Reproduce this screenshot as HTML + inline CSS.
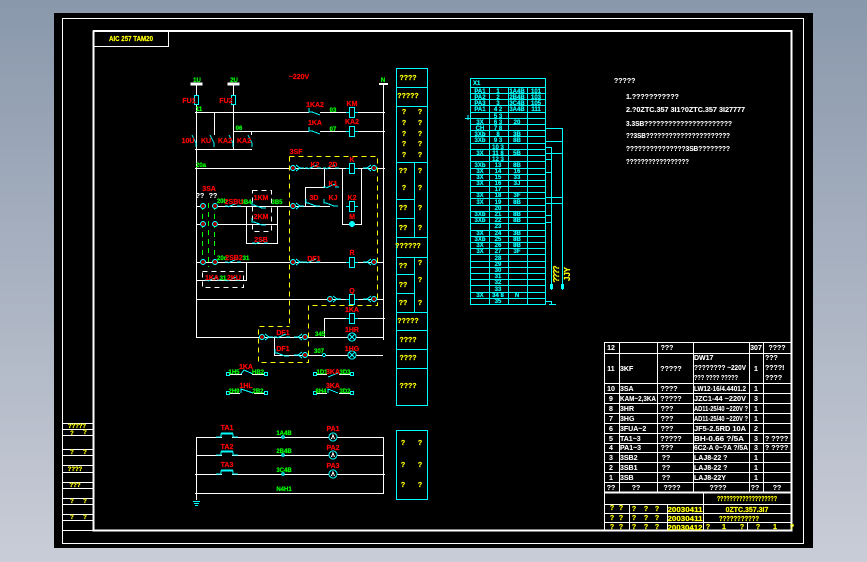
<!DOCTYPE html>
<html><head><meta charset="utf-8"><style>
html,body{margin:0;padding:0;width:867px;height:562px;overflow:hidden;background:linear-gradient(#8a98ac,#c9cdd7)}
svg{position:absolute;left:0;top:0;display:block}
svg *{shape-rendering:crispEdges}
text{font-family:"Liberation Sans",sans-serif;font-weight:bold;text-anchor:middle;stroke-width:.2px}
.r{fill:#f00;stroke:#f00;font-size:7px}.g{fill:#0f0;stroke:#0f0;font-size:6px}.y{fill:#ff0;stroke:#ff0;font-size:7px}
.w{fill:#fff;stroke:#fff;font-size:7px;stroke-width:.1px}.c{fill:#0ff;stroke:#0ff;font-size:6px}
.l{text-anchor:start}
.wl{stroke:#fff;fill:none}.cl{stroke:#0ff;fill:none}.yd{stroke:#ff0;fill:none;stroke-dasharray:5 4}.wd{stroke:#fff;fill:none;stroke-dasharray:5 4}.gd{stroke:#0f0;fill:none;stroke-dasharray:5 4}
</style></head><body>
<svg width="867" height="562" viewBox="0 0 867 562" xmlns="http://www.w3.org/2000/svg">
<defs>
<g id="coil"><rect x="-2.5" y="-5.5" width="5" height="10" fill="#000" stroke="#0ff" stroke-width="1"/><path d="M-6 -.5H-2.5M2.5 -.5H6" stroke="#0ff"/></g>
<g id="no"><path d="M-10 0H-7M-7 1L2 -3M2 0H6" stroke="#0ff" fill="none"/></g>
<g id="nc"><path d="M-9 -4V0H-7L1 3H5" stroke="#0ff" fill="none"/></g>
<g id="tl"><circle cx="0" cy="0" r="2.5" fill="#900" stroke="#0ff"/><path d="M3 -3L7 0L3 3M7 0H11" stroke="#0ff" fill="none"/></g>
<g id="tr"><circle cx="0" cy="0" r="2.5" fill="#900" stroke="#0ff"/><path d="M-3 -3L-7 0L-3 3M-7 0H-11" stroke="#0ff" fill="none"/></g>
<g id="t"><circle cx="0" cy="0" r="2.5" fill="#900" stroke="#0ff"/></g>
<g id="lamp"><circle r="4" fill="#000" stroke="#0ff"/><path d="M-3 -3L3 3M3 -3L-3 3" stroke="#0ff"/></g>
<g id="amm"><circle r="4" fill="#000" stroke="#0ff"/><path d="M-1.5 2L0 -2L1.5 2" stroke="#fff" fill="none"/></g>
<g id="push"><path d="M-11 0H-6V-3H6V0H11" stroke="#0ff" fill="none"/><path d="M-6 -4H6" stroke="#0ff"/></g>
<g id="dot"><rect x="-1.5" y="-1.5" width="3" height="3" fill="#000" stroke="#0ff"/></g>
</defs>
<rect x="54" y="13" width="759" height="535" fill="#000"/>
<g>
<rect x="62.5" y="18.5" width="741" height="525" class="wl"/>
<path d="M93.5 30.5V530.5H791.5V31H93" stroke="#fff" stroke-width="2" fill="none"/>
<path d="M168.5 31V46.5H94" class="wl"/>
<path d="M62 423.5H93M62 429.5H93M62 435.5H93M62 449.5H93M62 455.5H93M62 465.5H93M62 472.5H93M62 482.5H93M62 488.5H93M62 498.5H93M62 504.5H93M62 514.5H93M62 520.5H93M62 530.5H93" class="wl"/>
<path d="M196.5 84V337.5M233.5 84V150M383.5 84V340" class="wl"/>
<path d="M195 112.5H309M320 112.5H346M358 112.5H385M233 131.5H309M320 131.5H346M358 131.5H385" class="wl"/>
<path d="M214.5 112V135M195 149.5H252M195 168.5H385M251.5 131V135" class="wl"/>
<path d="M196 206.5H200M216 206.5H330M196 224.5H200M216 224.5H278M246.5 206V243.5H277.5V206" class="wl"/>
<path d="M196 262.5H383M196 280.5H246.5V262M196 299.5H383M196 337.5H383M274.5 337V355.5H383M324.5 337V318.5H385M305.5 206V187.5H324.5V168M342.5 168V206M342.5 206V224.5H361.5V168" class="wl"/>
<path d="M196.5 437V500M383.5 437V493.5M196 437.5H383M196 455.5H383M195 474.5H385M195 493.5H384" class="wl"/>
<path d="M191 83H202V85H191ZM228 83H239V85H228Z" fill="#fff" stroke="#fff"/>
<path d="M379 83H388V85H379Z" fill="#fff"/>
<rect x="194.5" y="95.5" width="4" height="9" fill="#000" stroke="#0ff"/>
<rect x="231.5" y="95.5" width="4" height="9" fill="#000" stroke="#0ff"/>
<path d="M289.5 156.5H377.5V305.5H308.5V362.5H258.5V326.5H289.5M289.5 156.5V326" class="yd"/>
<path d="M252.5 190.5H271.5V231.5H252.5Z" class="wd"/>
<path d="M202.5 271.5H243.5V287.5H202.5Z" class="wd"/>
<path d="M202.5 205V267M208.5 203V267M214.5 205V267" class="gd"/>
<path d="M396.5 68.5H427.5V405.5H396.5ZM396 87.5H428M396 106.5H428M396 162.5H428M396 199.5H414M396 218.5H414M396 237.5H428M396 257.5H428M396 274.5H414M396 293.5H414M396 312.5H428M396 330.5H428M396 349.5H428M396 368.5H428M414.5 162V237M414.5 257V312" class="cl"/>
<rect x="396.5" y="430.5" width="31" height="69" class="cl"/>
<rect x="470.5" y="78.5" width="75" height="226" class="cl"/>
<path d="M470 87.5H545M470 93.5H545M470 99.5H545M470 105.5H545M470 112.5H545M470 118.5H545M470 124.5H545M470 130.5H545M470 136.5H545M470 143.5H545M470 149.5H545M470 155.5H545M470 161.5H545M470 168.5H545M470 174.5H545M470 180.5H545M470 186.5H545M470 192.5H545M470 198.5H545M470 205.5H545M470 211.5H545M470 217.5H545M470 223.5H545M470 230.5H545M470 236.5H545M470 242.5H545M470 248.5H545M470 254.5H545M470 261.5H545M470 267.5H545M470 273.5H545M470 279.5H545M470 285.5H545M470 292.5H545M470 298.5H545" class="cl"/>
<path d="M489.5 87V305M508.5 87V305M527.5 87V305" class="cl"/>
<path d="M545 128.5H562.5V290M545 141.5H562M545 147.5H551.5V290M545 153.5H562M545 159.5H551M545 172.5H551M545 197.5H562M545 203.5H562M545 215.5H551M545 222.5H551M545 301.5H551.5V304M549 304.5H556" class="cl"/>
<rect x="550" y="284" width="3" height="5" fill="#0ff"/><rect x="561" y="284" width="3" height="5" fill="#0ff"/>
<path d="M465 118.5H470M468 115V120" class="cl"/>
<path d="M604.5 342.5H791M604 353.5H791M604 383.5H791M604 393.5H791M604 403.5H791M604 413.5H791M604 423.5H791M604 433.5H791M604 443.5H791M604 452.5H791M604 462.5H791M604 472.5H791M604 482.5H791" class="wl"/>
<path d="M604 492.5H791" stroke="#fff" stroke-width="2"/>
<path d="M604 504.5H791M604 513.5H791M604 522.5H791" class="wl"/>
<path d="M604.5 342V530M619.5 342V492M657.5 342V492M693.5 342V492M749.5 342V492M763.5 342V492M629.5 504V530M667.5 504V530M703.5 492V530M747.5 522V530" class="wl"/>
</g>
<use href="#coil" x="352" y="113"/><use href="#coil" x="352" y="132"/>
<use href="#coil" x="352" y="169"/><use href="#coil" x="352" y="207"/>
<use href="#coil" x="352" y="263"/><use href="#coil" x="352" y="300"/><use href="#coil" x="352" y="319"/>
<path d="M309 108V112H312L320 115M192 135L196 143V147M210 135L214 143V147M229 135L233 143V147M248 135L252 143V147M309 127V131H312L320 134" stroke="#0ff" fill="none"/>
<use href="#tl" x="293" y="168"/><use href="#tr" x="374" y="168"/><use href="#tl" x="293" y="206"/>
<use href="#no" x="315" y="168"/><use href="#no" x="333" y="168"/><use href="#no" x="333" y="187"/>
<use href="#nc" x="315" y="203"/><use href="#nc" x="333" y="203"/>
<circle cx="352" cy="224" r="3" fill="#0ff"/>
<use href="#t" x="203" y="206"/><use href="#t" x="215" y="206"/><use href="#t" x="203" y="224"/><use href="#t" x="215" y="224"/><use href="#t" x="203" y="262"/><use href="#t" x="215" y="262"/>
<use href="#nc" x="261" y="205"/><use href="#nc" x="261" y="222"/>
<use href="#no" x="235" y="206"/><use href="#no" x="235" y="262"/><use href="#no" x="262" y="243"/>
<use href="#no" x="215" y="280"/><use href="#no" x="234" y="280"/>
<use href="#tl" x="293" y="262"/><use href="#no" x="314" y="262"/><use href="#tr" x="374" y="262"/>
<use href="#tr" x="374" y="299"/><use href="#tl" x="330" y="299"/>
<use href="#tl" x="262" y="337"/><use href="#no" x="284" y="337"/><use href="#tr" x="305" y="337"/>
<use href="#nc" x="284" y="353"/><use href="#tr" x="305" y="355"/>
<use href="#lamp" x="352" y="337"/><use href="#lamp" x="352" y="355"/>
<circle cx="324" cy="355" r="1.5" fill="#000" stroke="#0ff"/>
<path d="M241 374L244 370L253 374M241 393V389L253 393M328 377L338 373M328 393V389L338 393" stroke="#0ff" fill="none"/>
<path d="M229 374.5H242M252 374.5H265M229 393.5H240M254 393.5H265M316 374.5H327M339 374.5H352M316 393.5H327M339 393.5H352" stroke="#fff" fill="none"/>
<use href="#dot" x="228" y="374"/><use href="#dot" x="266" y="374"/><use href="#dot" x="228" y="393"/><use href="#dot" x="266" y="393"/><use href="#dot" x="315" y="374"/><use href="#dot" x="352" y="374"/><use href="#dot" x="315" y="393"/><use href="#dot" x="352" y="393"/>
<path d="M222 437.5H232" stroke="#000" stroke-width="2"/><path d="M222 455.5H232" stroke="#000" stroke-width="2"/><path d="M222 474.5H232" stroke="#000" stroke-width="2"/>
<use href="#push" x="227" y="437"/><use href="#push" x="227" y="455"/><use href="#push" x="227" y="474"/>
<circle cx="283" cy="437" r="1.3" fill="#000" stroke="#0ff"/><circle cx="283" cy="455" r="1.3" fill="#000" stroke="#0ff"/><circle cx="283" cy="474" r="1.3" fill="#000" stroke="#0ff"/>
<use href="#amm" x="333" y="437"/><use href="#amm" x="333" y="455"/><use href="#amm" x="333" y="474"/>
<path d="M193 501.5H200M194 503.5H199M195 505.5H198" stroke="#0ff"/>
<text class="y" x="131" y="41" textLength="44" lengthAdjust="spacingAndGlyphs">AIC 257 TAM20</text>
<text class="g" x="197" y="82">1U</text><text class="g" x="234" y="82">2U</text><text class="g" x="383" y="82">N</text><text class="g" x="199" y="111">11</text><text class="g" x="239" y="130">06</text><text class="g" x="201" y="167">20a</text><text class="g" x="333" y="112">03</text><text class="g" x="333" y="131">07</text><text class="g" x="222" y="203">20b</text><text class="g" x="246" y="204">3B4</text><text class="g" x="277" y="204">3B5</text><text class="g" x="222" y="260">20c</text><text class="g" x="246" y="260">31</text><text class="g" x="223" y="280">31</text><text class="g" x="320" y="336">345</text><text class="g" x="319" y="353">307</text><text class="g" x="234" y="374">1H5</text><text class="g" x="258" y="374">HB2</text><text class="g" x="234" y="393">2H9</text><text class="g" x="258" y="393">2B2</text><text class="g" x="322" y="374">1D1</text><text class="g" x="345" y="374">3D3</text><text class="g" x="321" y="393">8H4</text><text class="g" x="345" y="393">3D2</text><text class="g" x="284" y="435">1A4B</text><text class="g" x="284" y="453">2B4B</text><text class="g" x="284" y="472">3C4B</text><text class="g" x="284" y="491">N4H1</text>
<text class="r" x="189" y="103">FU1</text><text class="r" x="226" y="103">FU2</text><text class="r" x="299" y="79">~220V</text><text class="r" x="315" y="107">1KA2</text><text class="r" x="352" y="106">KM</text><text class="r" x="315" y="125">1KA</text><text class="r" x="352" y="124">KA2</text><text class="r" x="188" y="143">10U</text><text class="r" x="206" y="143">KU</text><text class="r" x="225" y="143">KA2</text><text class="r" x="244" y="143">KA2</text><text class="r" x="296" y="154">3SF</text><text class="r" x="315" y="167">K2</text><text class="r" x="333" y="167">2D</text><text class="r" x="352" y="162">K</text><text class="r" x="333" y="186">K1</text><text class="r" x="314" y="200">3D</text><text class="r" x="333" y="200">KJ</text><text class="r" x="352" y="200">K2</text><text class="r" x="352" y="219">M</text><text class="r" x="209" y="191">3SA</text><text class="r" x="234" y="204">2SBU</text><text class="r" x="261" y="200">1KM</text><text class="r" x="261" y="219">2KM</text><text class="r" x="261" y="242">2SB</text><text class="r" x="234" y="260">2SB2</text><text class="r" x="212" y="280">1KA</text><text class="r" x="234" y="280">2KU</text><text class="r" x="314" y="261">DF1</text><text class="r" x="352" y="255">R</text><text class="r" x="352" y="293">Q</text><text class="r" x="352" y="312">1KA</text><text class="r" x="283" y="335">DF1</text><text class="r" x="283" y="351">DF1</text><text class="r" x="352" y="332">1HR</text><text class="r" x="352" y="351">1HG</text><text class="r" x="246" y="369">1KA</text><text class="r" x="246" y="388">1HL</text><text class="r" x="333" y="374">3KA</text><text class="r" x="333" y="388">3KA</text><text class="r" x="227" y="430">TA1</text><text class="r" x="227" y="449">TA2</text><text class="r" x="227" y="467">TA3</text><text class="r" x="333" y="431">PA1</text><text class="r" x="333" y="450">PA2</text><text class="r" x="333" y="468">PA3</text>
<text class="w" x="200" y="198">??</text><text class="w" x="213" y="198">??</text>
<text class="y" x="408" y="80">????</text><text class="y" x="408" y="98">?????</text>
<text class="y" x="404" y="114">?</text><text class="y" x="420" y="114">?</text><text class="y" x="404" y="125">?</text><text class="y" x="420" y="125">?</text><text class="y" x="404" y="136">?</text><text class="y" x="420" y="136">?</text><text class="y" x="404" y="146">?</text><text class="y" x="420" y="146">?</text><text class="y" x="404" y="157">?</text><text class="y" x="420" y="157">?</text>
<text class="y" x="403" y="173">??</text><text class="y" x="420" y="173">?</text><text class="y" x="404" y="190">?</text><text class="y" x="420" y="190">?</text><text class="y" x="403" y="210">??</text><text class="y" x="420" y="210">?</text><text class="y" x="403" y="230">??</text><text class="y" x="420" y="230">?</text>
<text class="y" x="408" y="248">??????</text><text class="y" x="403" y="268">??</text><text class="y" x="420" y="265">?</text><text class="y" x="403" y="287">??</text><text class="y" x="420" y="282">?</text><text class="y" x="403" y="305">??</text><text class="y" x="420" y="305">?</text>
<text class="y" x="408" y="323">?????</text><text class="y" x="408" y="342">????</text><text class="y" x="408" y="360">????</text><text class="y" x="408" y="388">????</text>
<text class="y" x="403" y="445">?</text><text class="y" x="420" y="445">?</text><text class="y" x="403" y="467">?</text><text class="y" x="420" y="467">?</text><text class="y" x="403" y="487">?</text><text class="y" x="420" y="487">?</text>
<text class="y" transform="translate(559,274) rotate(-90)" textLength="17" style="font-size:8px">????</text>
<text class="y" transform="translate(570,274) rotate(-90)" textLength="14" style="font-size:8px">JJY</text>
<text class="c l" x="473" y="85">X1</text>
<text class="c" x="480" y="93">PA1</text><text class="c" x="498" y="93">1</text><text class="c" x="517" y="93">1A4B</text><text class="c" x="536" y="93">101</text>
<text class="c" x="480" y="99">PA2</text><text class="c" x="498" y="99">2</text><text class="c" x="517" y="99">2B4B</text><text class="c" x="536" y="99">103</text>
<text class="c" x="480" y="105">PA3</text><text class="c" x="498" y="105">3</text><text class="c" x="517" y="105">3C4B</text><text class="c" x="536" y="105">105</text>
<text class="c" x="480" y="111">PA1</text><text class="c" x="498" y="111">4 2</text><text class="c" x="517" y="111">3A4B</text><text class="c" x="536" y="111">111</text>
<text class="c" x="498" y="118">5 3</text>
<text class="c" x="480" y="124">3X</text><text class="c" x="498" y="124">6 3</text><text class="c" x="517" y="124">20</text>
<text class="c" x="480" y="130">CH</text><text class="c" x="498" y="130">7 8</text>
<text class="c" x="480" y="136">3Xb</text><text class="c" x="498" y="136">8</text><text class="c" x="517" y="136">3B</text>
<text class="c" x="480" y="142">3Xb</text><text class="c" x="498" y="142">9 3</text><text class="c" x="517" y="142">8B</text>
<text class="c" x="498" y="149">10 3</text>
<text class="c" x="480" y="155">3X</text><text class="c" x="498" y="155">11 8</text><text class="c" x="517" y="155">5B</text>
<text class="c" x="498" y="161">12 3</text>
<text class="c" x="480" y="167">3Xb</text><text class="c" x="498" y="167">13</text><text class="c" x="517" y="167">8B</text>
<text class="c" x="480" y="173">3X</text><text class="c" x="498" y="173">14</text><text class="c" x="517" y="173">16</text>
<text class="c" x="480" y="179">3X</text><text class="c" x="498" y="179">15</text><text class="c" x="517" y="179">33</text>
<text class="c" x="480" y="185">3X</text><text class="c" x="498" y="185">16</text><text class="c" x="517" y="185">3J</text>
<text class="c" x="498" y="191">17</text>
<text class="c" x="480" y="197">3X</text><text class="c" x="498" y="197">18</text><text class="c" x="517" y="197">3F</text>
<text class="c" x="480" y="204">3X</text><text class="c" x="498" y="204">19</text><text class="c" x="517" y="204">8B</text>
<text class="c" x="498" y="210">20</text>
<text class="c" x="480" y="216">3Xb</text><text class="c" x="498" y="216">21</text><text class="c" x="517" y="216">8B</text>
<text class="c" x="480" y="222">3Xb</text><text class="c" x="498" y="222">22</text><text class="c" x="517" y="222">8B</text>
<text class="c" x="498" y="228">23</text>
<text class="c" x="480" y="235">3X</text><text class="c" x="498" y="235">24</text><text class="c" x="517" y="235">3B</text>
<text class="c" x="480" y="241">3Xb</text><text class="c" x="498" y="241">25</text><text class="c" x="517" y="241">8B</text>
<text class="c" x="480" y="247">3X</text><text class="c" x="498" y="247">26</text><text class="c" x="517" y="247">8B</text>
<text class="c" x="480" y="253">3X</text><text class="c" x="498" y="253">27</text><text class="c" x="517" y="253">3F</text>
<text class="c" x="498" y="260">28</text><text class="c" x="498" y="266">29</text><text class="c" x="498" y="272">30</text><text class="c" x="498" y="278">31</text><text class="c" x="498" y="284">32</text><text class="c" x="498" y="291">33</text>
<text class="c" x="480" y="297">3X</text><text class="c" x="498" y="297">34 8</text><text class="c" x="517" y="297">N</text><text class="c" x="498" y="303">35</text>
<text class="w l" x="614" y="83">?????</text><text class="w l" x="626" y="99">1.???????????</text><text class="w l" x="626" y="112" textLength="119" lengthAdjust="spacingAndGlyphs">2.?0ZTC.357 3I1?0ZTC.357 3I27777</text><text class="w l" x="626" y="126" textLength="106" lengthAdjust="spacingAndGlyphs">3.3SB??????????????????????</text><text class="w l" x="626" y="138" textLength="104" lengthAdjust="spacingAndGlyphs">??3SB??????????????????????</text><text class="w l" x="626" y="151" textLength="104" lengthAdjust="spacingAndGlyphs">???????????????3SB????????</text><text class="w l" x="626" y="164" textLength="63" lengthAdjust="spacingAndGlyphs">?????????????????</text>
<text class="w" x="611" y="350">12</text><text class="w" x="667" y="350">???</text><text class="w" x="756" y="350">307</text><text class="w" x="777" y="350">????</text>
<text class="w" x="611" y="371">11</text><text class="w l" x="620" y="371">3KF</text><text class="w" x="671" y="371">?????</text><text class="w l" x="694" y="360">DW17</text><text class="w l" x="694" y="370" textLength="52" lengthAdjust="spacingAndGlyphs">???????? ~220V</text><text class="w l" x="694" y="380" textLength="44" lengthAdjust="spacingAndGlyphs">??? ???? ?????</text><text class="w" x="756" y="371">1</text><text class="w l" x="765" y="360">???</text><text class="w l" x="765" y="370">????!</text><text class="w l" x="765" y="380">????</text>
<text class="w" x="611" y="391">10</text><text class="w l" x="620" y="391">3SA</text><text class="w" x="669" y="391">????</text><text class="w l" x="694" y="391" textLength="52" lengthAdjust="spacingAndGlyphs">LW12-16/4.4401.2</text><text class="w" x="756" y="391">1</text>
<text class="w" x="611" y="401">9</text><text class="w l" x="620" y="401" textLength="36" lengthAdjust="spacingAndGlyphs">KAM~2,3KA</text><text class="w" x="671" y="401">?????</text><text class="w l" x="694" y="401" textLength="52" lengthAdjust="spacingAndGlyphs">JZC1-44 ~220V</text><text class="w" x="756" y="401">3</text>
<text class="w" x="611" y="411">8</text><text class="w l" x="620" y="411">3HR</text><text class="w" x="667" y="411">???</text><text class="w l" x="694" y="411" textLength="54" lengthAdjust="spacingAndGlyphs">AD11-25/40 ~220V ?</text><text class="w" x="756" y="411">1</text>
<text class="w" x="611" y="421">7</text><text class="w l" x="620" y="421">3HG</text><text class="w" x="667" y="421">???</text><text class="w l" x="694" y="421" textLength="54" lengthAdjust="spacingAndGlyphs">AD11-25/40 ~220V ?</text><text class="w" x="756" y="421">1</text>
<text class="w" x="611" y="431">6</text><text class="w l" x="620" y="431">3FUA~2</text><text class="w" x="667" y="431">???</text><text class="w l" x="694" y="431" textLength="52" lengthAdjust="spacingAndGlyphs">JF5-2.5RD 10A</text><text class="w" x="756" y="431">2</text>
<text class="w" x="611" y="441">5</text><text class="w l" x="620" y="441">TA1~3</text><text class="w" x="671" y="441">?????</text><text class="w l" x="694" y="441" textLength="50" lengthAdjust="spacingAndGlyphs">BH-0.66 ?/5A</text><text class="w" x="756" y="441">3</text><text class="w l" x="765" y="441">? ????</text>
<text class="w" x="611" y="450">4</text><text class="w l" x="620" y="450">PA1~3</text><text class="w" x="667" y="450">???</text><text class="w l" x="694" y="450" textLength="54" lengthAdjust="spacingAndGlyphs">6C2-A 0~?A ?/5A</text><text class="w" x="756" y="450">3</text><text class="w l" x="765" y="450">? ????</text>
<text class="w" x="611" y="460">3</text><text class="w l" x="620" y="460">3SB2</text><text class="w" x="666" y="460">??</text><text class="w l" x="694" y="460">LAJ8-22 ?</text><text class="w" x="756" y="460">1</text>
<text class="w" x="611" y="470">2</text><text class="w l" x="620" y="470">3SB1</text><text class="w" x="666" y="470">??</text><text class="w l" x="694" y="470">LAJ8-22 ?</text><text class="w" x="756" y="470">1</text>
<text class="w" x="611" y="480">1</text><text class="w l" x="620" y="480">3SB</text><text class="w" x="666" y="480">??</text><text class="w l" x="694" y="480">LAJ8-22Y</text><text class="w" x="756" y="480">1</text>
<text class="w" x="611" y="490">??</text><text class="w" x="636" y="490">??</text><text class="w" x="672" y="490">????</text><text class="w" x="718" y="490">????</text><text class="w" x="755" y="490">??</text><text class="w" x="777" y="490">??</text>
<text class="y" x="77" y="428" style="font-size:6px" textLength="18" lengthAdjust="spacingAndGlyphs">?????</text>
<text class="y" x="72" y="435" style="font-size:6px">?</text><text class="y" x="85" y="434" style="font-size:6px">?</text><text class="y" x="72" y="454" style="font-size:6px">?</text><text class="y" x="85" y="454" style="font-size:6px">?</text>
<text class="y" x="75" y="471" style="font-size:6px">????</text><text class="y" x="75" y="487" style="font-size:6px">???</text>
<text class="y" x="72" y="503" style="font-size:6px">?</text><text class="y" x="85" y="503" style="font-size:6px">?</text><text class="y" x="72" y="519" style="font-size:6px">?</text><text class="y" x="85" y="519" style="font-size:6px">?</text>
<text class="y" x="747" y="501" textLength="60" lengthAdjust="spacingAndGlyphs">???????????????????</text>
<text class="y" x="747" y="512">0ZTC.357.3I7</text>
<text class="y" x="739" y="521" textLength="40" lengthAdjust="spacingAndGlyphs">???????????</text>
<text class="y" x="685" y="512" textLength="35" lengthAdjust="spacingAndGlyphs">20030411</text>
<text class="y" x="685" y="521" textLength="35" lengthAdjust="spacingAndGlyphs">20030411</text>
<text class="y" x="685" y="530" textLength="35" lengthAdjust="spacingAndGlyphs">20030412</text>
<text class="y" x="612" y="510">?</text><text class="y" x="621" y="510">?</text><text class="y" x="634" y="511">?</text><text class="y" x="646" y="511">?</text><text class="y" x="657" y="511">?</text>
<text class="y" x="612" y="520">?</text><text class="y" x="621" y="520">?</text><text class="y" x="634" y="520">?</text><text class="y" x="646" y="520">?</text><text class="y" x="657" y="520">?</text>
<text class="y" x="612" y="529">?</text><text class="y" x="621" y="529">?</text><text class="y" x="634" y="529">?</text><text class="y" x="646" y="529">?</text><text class="y" x="657" y="529">?</text>
<text class="y" x="708" y="529">?</text><text class="y" x="724" y="529">1</text><text class="y" x="742" y="529">?</text><text class="y" x="758" y="529">?</text><text class="y" x="775" y="529">1</text><text class="y" x="792" y="529">?</text>
</svg>
</body></html>
